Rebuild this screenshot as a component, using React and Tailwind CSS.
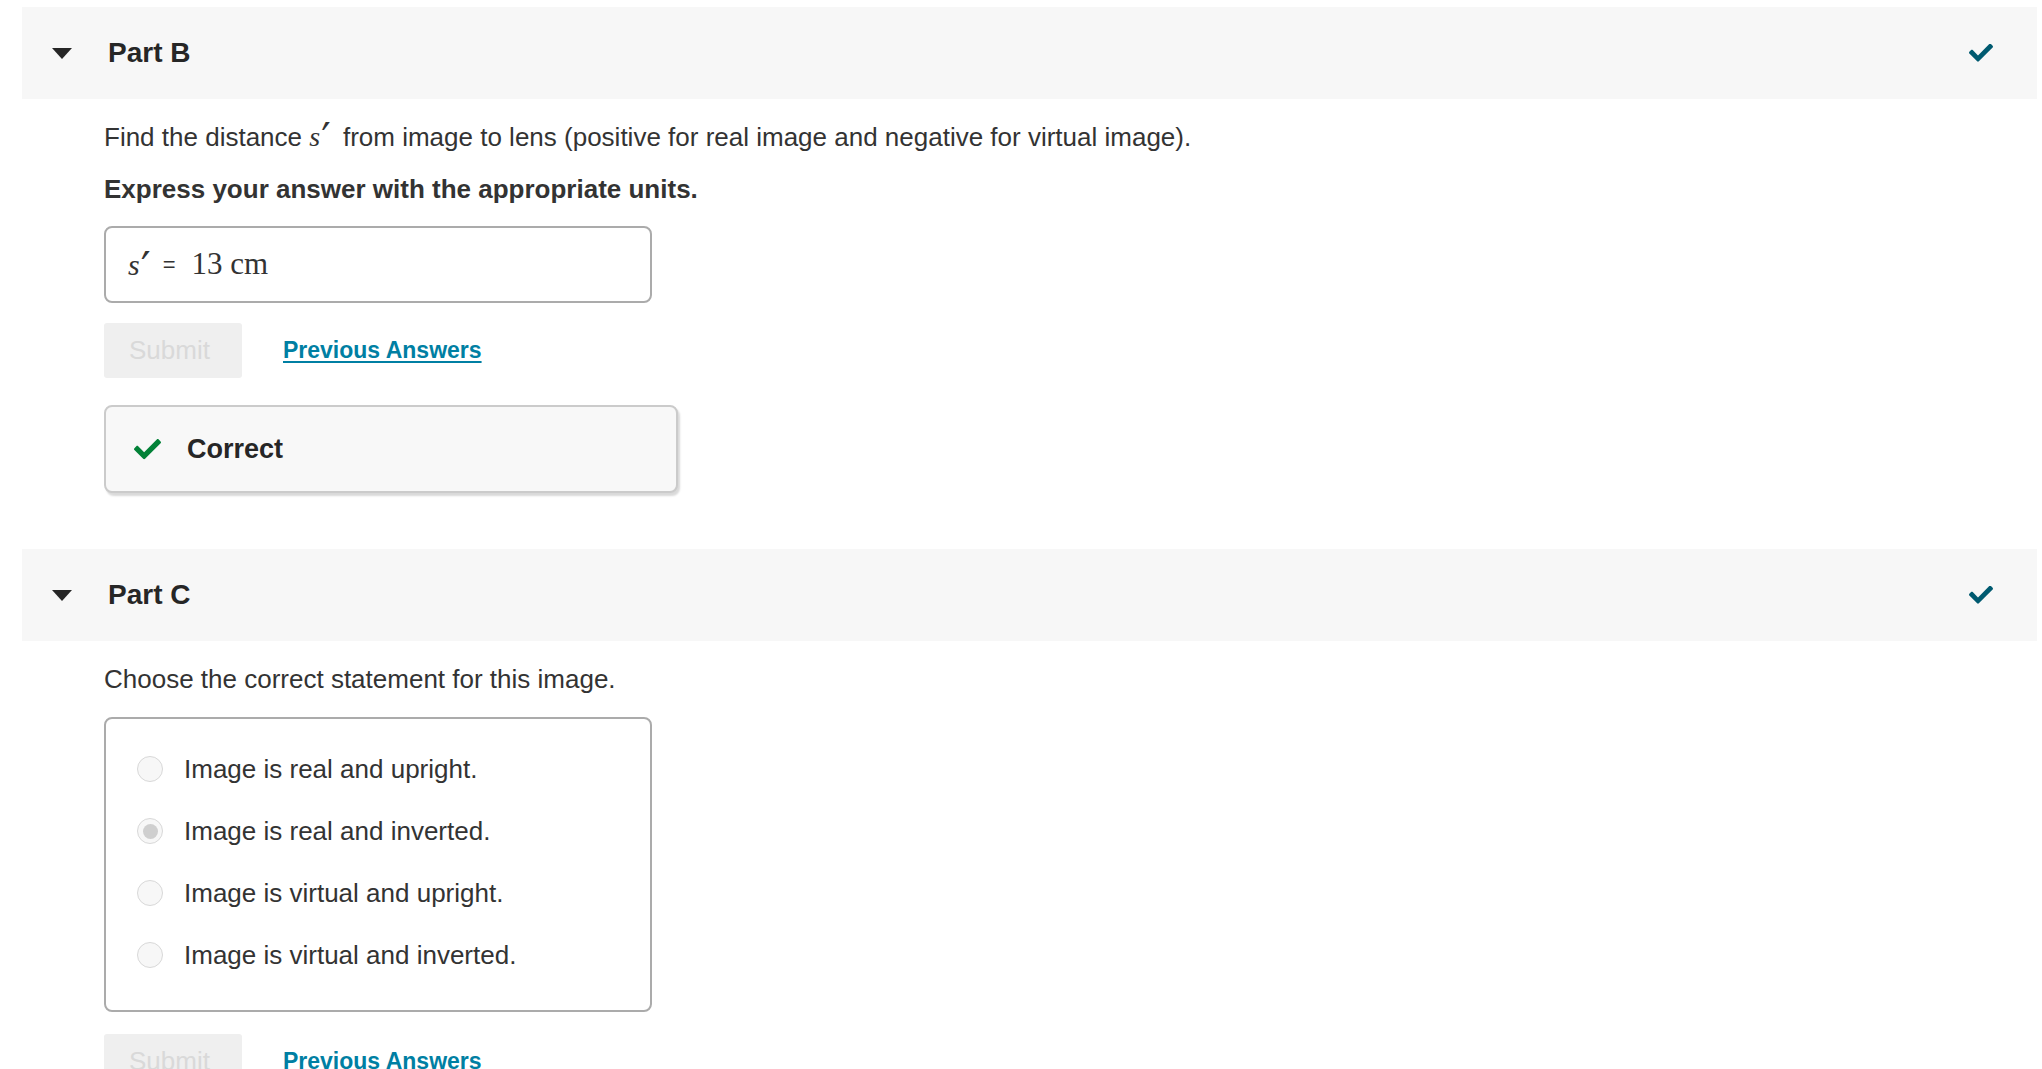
import React from 'react';

const CheckIcon = ({ className }) => (
  <svg viewBox="0 0 512 380" className={className} fill="currentColor">
    <path d="M173.898 367.404l-166.4-166.4c-9.997-9.997-9.997-26.206 0-36.204l36.203-36.204c9.997-9.998 26.207-9.998 36.204 0L192 240.69 432.095 0.596c9.997-9.997 26.207-9.997 36.204 0l36.203 36.204c9.997 9.997 9.997 26.206 0 36.204l-294.4 294.401c-9.998 9.997-26.207 9.997-36.204-.001z" />
  </svg>
);

const PartHeader = ({ title }) => (
  <div className="ml-[22px] mr-[5px] h-[92px] bg-[#f7f7f7] flex items-center">
    <svg viewBox="0 0 20 11" className="ml-[30px] w-[20px] h-[11px]">
      <polygon points="0,0 20,0 10,11" fill="#262626" />
    </svg>
    <span className="ml-[36px] text-[28px] font-bold text-[#262626]">{title}</span>
    <CheckIcon className="ml-auto mr-[44px] w-[24px] h-[18px] text-[#005a70]" />
  </div>
);

const SubmitRow = () => (
  <div className="flex items-center">
    <button className="w-[138px] h-[55px] rounded-[3px] bg-[#efefef] text-[#d9d9d9] text-[26px] text-left pl-[25px]">
      Submit
    </button>
    <a href="#" className="ml-[41px] text-[23px] font-bold text-[#007fa3] underline underline-offset-[3px]">
      Previous Answers
    </a>
  </div>
);

const Prime = ({ className }) => (
  <span className={`leading-[0px] font-['DejaVu_Sans',sans-serif] relative ${className}`}>′</span>
);

const options = [
  { label: 'Image is real and upright.', selected: false },
  { label: 'Image is real and inverted.', selected: true },
  { label: 'Image is virtual and upright.', selected: false },
  { label: 'Image is virtual and inverted.', selected: false },
];

export default function App() {
  return (
    <div className="w-full h-[1069px] overflow-hidden bg-white text-[#333] font-['Liberation_Sans',Arial,sans-serif]">
      <div className="pt-[7px]">
        <PartHeader title="Part B" />
      </div>

      <div className="pl-[104px]">
        <p className="mt-[24px] text-[26px] leading-[28px]">
          Find the distance{' '}
          <span className="font-['Liberation_Serif',serif] italic text-[28px] leading-[0px]">s</span>
          <Prime className="text-[42px] top-[7px] ml-[1px] mr-[5px]" />{' '}
          from image to lens (positive for real image and negative for virtual image).
        </p>
        <p className="mt-[24px] text-[26px] leading-[28px] font-bold">
          Express your answer with the appropriate units.
        </p>

        <div className="mt-[23px] w-[548px] h-[77px] border-2 border-[#ababab] rounded-[8px] flex items-center pl-[22px]">
          <span className="font-['Liberation_Serif',serif] italic text-[30px]">s</span>
          <Prime className="text-[44px] top-[4px] ml-[1px]" />
          <span className="ml-[12px] text-[22px]">=</span>
          <span className="ml-[16px] font-['Liberation_Serif',serif] text-[31px]">13 cm</span>
        </div>

        <div className="mt-[20px]">
          <SubmitRow />
        </div>

        <div className="mt-[27px] w-[574px] h-[88px] bg-[#f8f8f8] border-2 border-[#cbcbcb] rounded-[8px] shadow-[2px_3px_2px_rgba(0,0,0,0.15)] flex items-center">
          <CheckIcon className="ml-[28px] w-[27px] h-[21px] text-[#038238]" />
          <span className="ml-[26px] text-[27px] font-bold text-[#262626]">Correct</span>
        </div>
      </div>

      <div className="mt-[56px]">
        <PartHeader title="Part C" />
      </div>

      <div className="pl-[104px]">
        <p className="mt-[24px] text-[26px] leading-[28px]">Choose the correct statement for this image.</p>

        <div className="mt-[24px] w-[548px] h-[295px] border-2 border-[#ababab] rounded-[8px] flex flex-col pt-[37px] pl-[31px] gap-[36px]">
          {options.map((o, i) => (
            <label key={i} className="flex items-center h-[26px]">
              <span className="w-[26px] h-[26px] rounded-full border border-[#d8d8d8] bg-[#f7f7f7] flex items-center justify-center">
                {o.selected && <span className="w-[15px] h-[15px] rounded-full bg-[#cfcfcf]" />}
              </span>
              <span className="ml-[21px] text-[26px]">{o.label}</span>
            </label>
          ))}
        </div>

        <div className="mt-[22px]">
          <SubmitRow />
        </div>
      </div>
    </div>
  );
}
